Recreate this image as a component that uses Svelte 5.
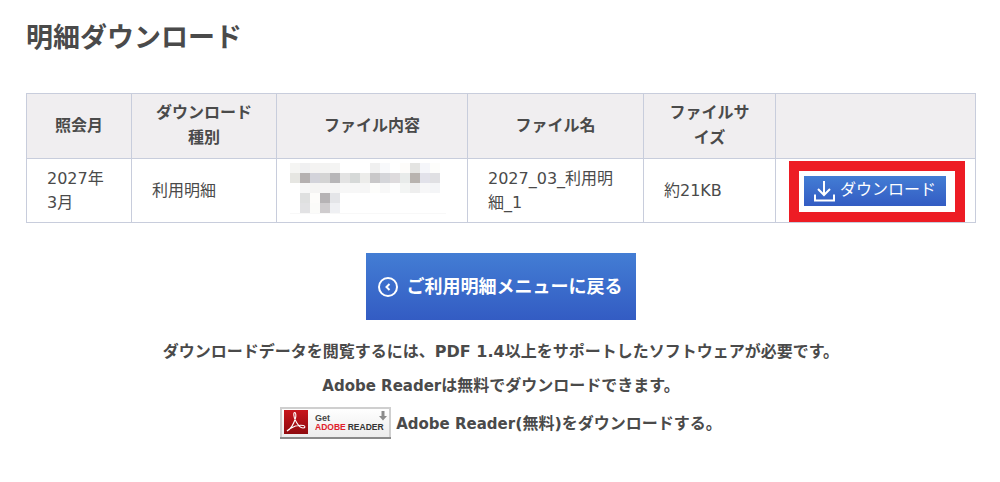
<script>
    // mosaic that hides the file description
    const mosaic = [
        ["f5f5f3","f0f0f1","f4f3f2","f3f3f2","f4f4f3","fff","fff","fff","f0f0f0","f8f9fb","fff","fdfcfa","e4e4e2","f5f6fa","fdfdfb"],
        ["e6e6e2","b5b1b1","d3d3da","d4d4d4","b7b6b8","e3e3e3","d6d9d8","ececea","c9c8c9","d5d6da","dedbdd","e8ebea","b8b3af","e2e2ea","e0e0e3"],
        ["fff","f7f7f7","f5f4f3","f6f5f5","f5f5f5","f7f7f7","f7f7f7","f6f6f6","fdfdfb","f8f8f8","fdfdfd","f3f5f4","eeeeee","f7f7f8","f4f5f7"],
        ["fff","dfe0e0","fdfcfa","b6b3b5","e4e5e8"],
        ["fff","e2e2e4","fbfbf9","cfccce","eff0f3"]
    ];
</script>

<main class="page">
    <h1>明細ダウンロード</h1>

    <table>
        <thead>
            <tr>
                <th class="c1">照会月</th>
                <th class="c2">ダウンロード<br />種別</th>
                <th class="c3">ファイル内容</th>
                <th class="c4">ファイル名</th>
                <th class="c5">ファイルサ<br />イズ</th>
                <th class="c6"></th>
            </tr>
        </thead>
        <tbody>
            <tr>
                <td class="month">2027年<br />3月</td>
                <td class="kind">利用明細</td>
                <td class="blurred">
                    <div class="mosaic">
                        {#each mosaic as row}
                            <div class="mosaic-row">
                                {#each row as color}
                                    <span style="background:#{color}"></span>
                                {/each}
                            </div>
                        {/each}
                    </div>
                </td>
                <td class="name">2027_03_利用明<br />細_1</td>
                <td class="size">約21KB</td>
                <td class="action">
                    <div class="highlight">
                        <a class="dl" href="#top">
                            <svg width="22" height="22" viewBox="0 0 22 22" fill="none" stroke="#fff" stroke-width="2">
                                <path d="M11 1v13.5M5 9l6 6 6-6" />
                                <path d="M2 14.5V20.500h19V14.500" />
                            </svg>
                            <span>ダウンロード</span>
                        </a>
                    </div>
                </td>
            </tr>
        </tbody>
    </table>

    <a class="back" href="#top">
        <svg width="20" height="20" viewBox="0 0 20 20" fill="none" stroke="#fff">
            <circle cx="10" cy="10" r="9" stroke-width="2" />
            <path d="M11.500 7 8.500 10l3 3" stroke-width="2" />
        </svg>
        <span>ご利用明細メニューに戻る</span>
    </a>

    <p class="note first">ダウンロードデータを閲覧するには、PDF 1.4以上をサポートしたソフトウェアが必要です。</p>
    <p class="note second"><span class="latin">Adobe Reader</span>は無料でダウンロードできます。</p>
    <p class="note get">
        <svg class="badge" width="111" height="33" viewBox="0 0 111 33">
            <defs>
                <linearGradient id="pdf-red" x1="0" y1="0" x2="0" y2="1">
                    <stop offset="0" stop-color="#c8161c" />
                    <stop offset="1" stop-color="#8f0a0e" />
                </linearGradient>
                <linearGradient id="badge-bg" x1="0" y1="0" x2="0" y2="1">
                    <stop offset="0" stop-color="#ffffff" />
                    <stop offset="1" stop-color="#ececec" />
                </linearGradient>
            </defs>
            <rect x="1" y="1" width="109" height="30" fill="url(#badge-bg)" stroke="#cfcfcf" stroke-width="2" />
            <rect x="0" y="30" width="111" height="2" fill="#8a8a8a" />
            <rect x="4" y="3" width="24" height="24" fill="url(#pdf-red)" />
            <path d="M7 24c4-2 7-8 8.500-13 .6-2 .5-5.500-.8-5.500-1.500 0-1 4.500.8 8 2 4 5 7.500 7.500 7.500 2.500 0 2.500-2.200.3-2.500-3.500-.5-9 .5-13 3-2 1.300-3.300 2.500-3.300 2.500z" fill="none" stroke="#fff" stroke-width="1.100" />
            <text x="35" y="14" class="b-get">Get</text>
            <text x="35" y="23" class="b-adobe">ADOBE<tspan class="b-reader" dx="2">READER</tspan></text>
            <path d="M101.500 4h3v5h2.500l-4 4.500-4-4.500h2.500z" fill="#8b8b8b" />
        </svg>
        <span><span class="latin">Adobe Reader</span>(無料)をダウンロードする。</span>
    </p>
</main>

<style>
    :global(body) {
        background: #fff;
        color: #4a4a4a;
        font-family: "DejaVu Sans", "Noto Sans CJK JP", sans-serif;
    }

    .page {
        box-sizing: border-box;
        width: 1000px;
        height: 482px;
        padding: 19px 24px 0 26px;
        display: flex;
        flex-direction: column;
        align-items: center;
    }

    h1 {
        align-self: flex-start;
        margin: 0 0 37px;
        font-size: 27px;
        line-height: 37px;
        font-weight: 700;
    }

    table {
        width: 950px;
        border-collapse: collapse;
        table-layout: fixed;
    }

    th, td {
        border: 1px solid #c8cddc;
        padding: 0;
    }

    th {
        height: 62px;
        padding-bottom: 2px;
        background: #f0eef0;
        font-weight: 700;
        font-size: 16px;
        line-height: 25px;
        text-align: center;
    }

    td {
        height: 63px;
        text-align: left;
        font-size: 16px;
        line-height: 24px;
    }

    .c1 { width: 104px; }
    .c2 { width: 144px; }
    .c3 { width: 190px; }
    .c4 { width: 175px; }
    .c5 { width: 131px; }

    .month { padding-left: 20px; }
    .kind { padding-left: 20px; }
    .name { padding-left: 20px; }
    .size { padding-left: 20px; }

    .blurred {
        padding-left: 13px;
        vertical-align: top;
    }

    .mosaic {
        margin-top: 4px;
        width: 156px;
        border-bottom: 1px solid #f8f8f8;
    }

    .mosaic-row {
        display: flex;
    }

    .mosaic-row span {
        width: 10px;
        height: 10px;
    }

    .action {
        padding: 0 9px 0 13px;
        vertical-align: top;
    }

    .highlight {
        box-sizing: border-box;
        width: 176px;
        height: 61px;
        margin: 2px 0 0;
        border: 10px solid #ed1c24;
        padding: 5px;
        background: #fff;
    }

    .dl {
        display: flex;
        align-items: center;
        gap: 5px;
        box-sizing: border-box;
        width: 142px;
        height: 30px;
        padding-left: 9px;
        background: linear-gradient(#437dd4, #335cc3);
        color: #fff;
        font-size: 16px;
        text-decoration: none;
    }

    .dl span {
        margin-bottom: 2px;
    }

    .back {
        display: flex;
        align-items: center;
        justify-content: center;
        gap: 9px;
        margin-top: 30px;
        width: 270px;
        height: 67px;
        box-sizing: border-box;
        padding-right: 2px;
        background: linear-gradient(#437dd4, #335cc3);
        color: #fff;
        font-size: 18px;
        font-weight: 700;
        text-decoration: none;
    }

    .back span {
        margin-bottom: 4px;
    }

    .note {
        margin: 0;
        font-size: 16px;
        line-height: 22px;
        font-weight: 700;
        text-align: center;
        white-space: nowrap;
    }

    .latin {
        font-size: 15px;
    }

    .first { margin-top: 21px; }
    .second { margin-top: 12px; }

    .get {
        display: flex;
        align-items: center;
        gap: 5px;
        margin-top: 10px;
    }

    .b-get {
        font: 700 9px "Liberation Sans", sans-serif;
        fill: #444;
    }

    .b-adobe {
        font: 700 8.500px "Liberation Sans", sans-serif;
        fill: #e0202a;
    }

    .b-reader {
        fill: #333;
    }
</style>
